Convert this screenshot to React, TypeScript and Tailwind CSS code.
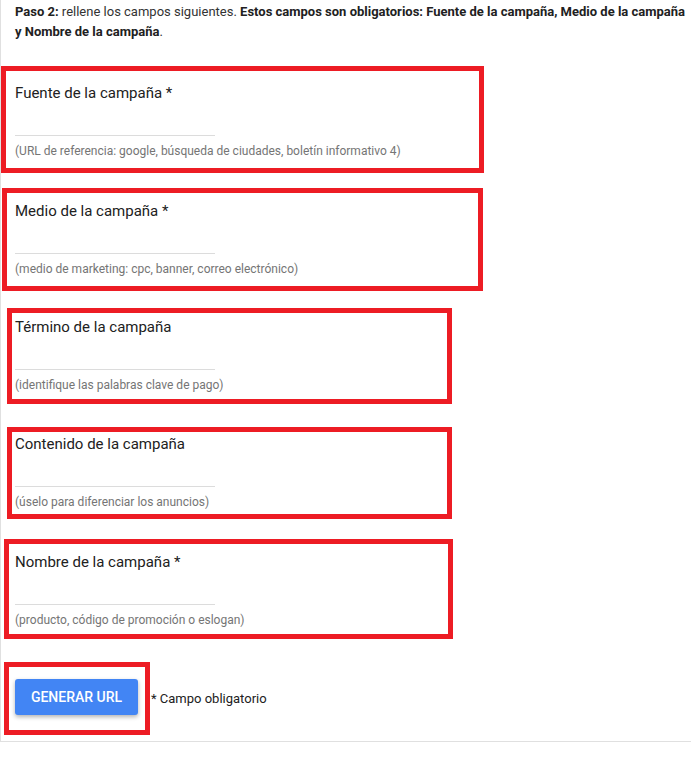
import React from "react";

type Field = {
  label: string;
  helper: string;
  box: string;
};

const fields: Field[] = [
  {
    label: "Fuente de la campaña *",
    helper: "(URL de referencia: google, búsqueda de ciudades, boletín informativo 4)",
    box: "mt-[24px] ml-0 w-[483px] pt-[12px] pb-[9px] pl-[9px]",
  },
  {
    label: "Medio de la campaña *",
    helper: "(medio de marketing: cpc, banner, correo electrónico)",
    box: "mt-[15px] ml-[1px] w-[481px] pt-[8px] pb-[9px] pl-[8px]",
  },
  {
    label: "Término de la campaña",
    helper: "(identifique las palabras clave de pago)",
    box: "mt-[17px] ml-[6px] w-[445px] pt-[4px] pb-[6px] pl-[3px]",
  },
  {
    label: "Contenido de la campaña",
    helper: "(úselo para diferenciar los anuncios)",
    box: "mt-[23px] ml-[6px] w-[445px] pt-[2px] pb-[4px] pl-[3px]",
  },
  {
    label: "Nombre de la campaña *",
    helper: "(producto, código de promoción o eslogan)",
    box: "mt-[20px] ml-[3px] w-[449px] pt-[8px] pb-[6px] pl-[6px]",
  },
];

export default function App() {
  return (
    <div
      className="w-[691px] h-[742px] bg-white border-l border-b border-[#e0e0e0] flex flex-col"
      style={{ fontFamily: "Roboto, 'Liberation Sans', sans-serif" }}
    >
      <p className="pl-[14px] pt-[2px] text-[13px] leading-[20px] text-[#333333]">
        <b className="font-bold text-[#212121]">Paso 2:</b> rellene los campos siguientes.{" "}
        <b className="font-bold text-[#212121]">
          Estos campos son obligatorios: Fuente de la campaña, Medio de la campaña
        </b>
        <br />
        <b className="font-bold text-[#212121]">y Nombre de la campaña</b>.
      </p>

      {fields.map((f) => (
        <div key={f.label} className={`border-[5px] border-[#ed1c24] ${f.box}`}>
          <div className="text-[15px] leading-[20px] text-[#212121]">{f.label}</div>
          <div className="w-[200px] h-[33px] border-b border-[#dcdcdc]" />
          <div className="mt-[7px] text-[12px] leading-[16px] text-[#757575]">{f.helper}</div>
        </div>
      ))}

      <div className="mt-[23px] flex items-center">
        <div className="ml-[3px] w-[146px] border-[5px] border-[#ed1c24] pt-[12px] pb-[15px] pl-[6px]">
          <button className="w-[123px] h-[36px] rounded-[3px] bg-[#4285f4] text-white text-[14px] font-medium uppercase shadow-[0_2px_4px_rgba(0,0,0,0.3)]">
            Generar URL
          </button>
        </div>
        <span className="ml-[1px] text-[13px] leading-[20px] text-[#212121]">* Campo obligatorio</span>
      </div>
    </div>
  );
}
